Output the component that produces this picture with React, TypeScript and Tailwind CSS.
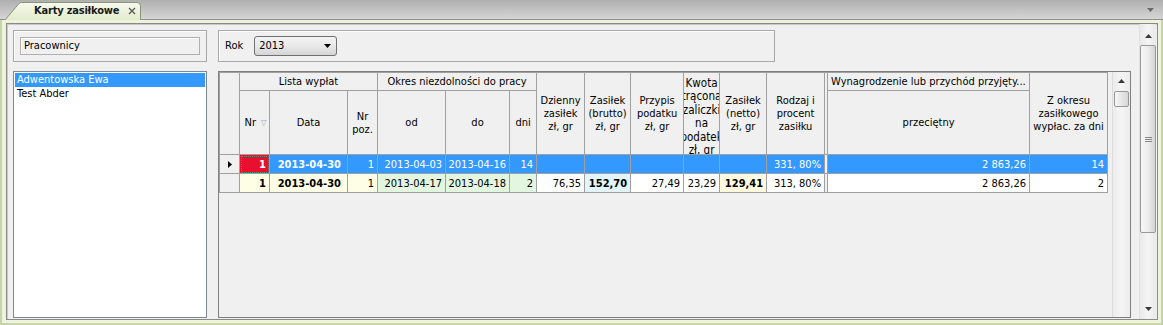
import React from 'react';

function Tri({ up = true, color = '#3a3a3a' }: { up?: boolean; color?: string }) {
  return (
    <svg width="7" height="4" viewBox="0 0 7 4">
      <path d={up ? 'M0 4 L3.5 0 L7 4 Z' : 'M0 0 L7 0 L3.5 4 Z'} fill={color} />
    </svg>
  );
}

const th = 'border border-[#a0a0a0] bg-[#f0f0f0] font-normal text-center align-middle p-0 leading-[13px]';
const td = 'border border-[#a0a0a0] text-right align-middle pr-[3px] pl-0 py-0 leading-none whitespace-nowrap overflow-hidden';
const dbl = 'border border-[#a0a0a0] bg-[#f0f0f0] p-0';

function Lines({ lines }: { lines: string[] }) {
  return (
    <div className="flex flex-col items-center">
      {lines.map((l) => (
        <span key={l} className="whitespace-nowrap">{l}</span>
      ))}
    </div>
  );
}

export default function App() {
  return (
    <div className="w-[1163px] h-[325px] overflow-hidden flex flex-col bg-[#f0f0f0] text-[11px] text-black font-['DejaVu_Sans_Condensed','DejaVu_Sans',sans-serif] [font-stretch:condensed] select-none">
      {/* tab strip */}
      <div className="h-[20px] shrink-0 flex items-end bg-gradient-to-b from-[#afafaf] to-[#d6d6d6] border-b border-[#8f8f8f]">
        <div className="relative ml-[5px] -mb-px w-[136px] h-[18px] flex items-center">
          <svg className="absolute inset-0" width="136" height="18" viewBox="0 0 136 18">
            <defs>
              <linearGradient id="tabg" x1="0" y1="0" x2="0" y2="1">
                <stop offset="0" stopColor="#f7faee" />
                <stop offset="1" stopColor="#e3ebcb" />
              </linearGradient>
            </defs>
            <path d="M0 18 L14 1.6 Q15 0.5 16.5 0.5 L132 0.5 Q135.5 0.5 135.5 4 L135.5 18" fill="url(#tabg)" stroke="#8b957a" />
          </svg>
          <span className="relative pl-[29px] font-bold text-[11px] tracking-[-0.2px] text-[#1a1a1a] whitespace-nowrap">Karty zasiłkowe</span>
          <svg className="relative ml-auto mr-[5px]" width="8" height="8" viewBox="0 0 8 8">
            <path d="M1 1 L7 7 M7 1 L1 7" stroke="#5a5a5a" strokeWidth="1.4" />
          </svg>
        </div>
        <div className="ml-auto mr-[9px] mb-[7px]">
          <Tri up={false} color="#6a6a6a" />
        </div>
      </div>

      {/* frame */}
      <div className="flex-1 min-h-0 bg-[#eff3de] border-l-2 border-r-2 border-b-2 border-[#c6d4a7] pt-[3px] pb-[3px] pl-[4px] pr-[3px]">
        <div className="h-full flex border border-[#8a8a8a] bg-[#f0f0f0] shadow-[inset_1px_1px_0_#c9c9c9]">
          <div className="flex-1 flex gap-[11px] pl-[6px] pt-[6px] pb-[1px]">
            {/* left column */}
            <div className="w-[194px] flex flex-col gap-[9px]">
              <div className="h-[32px] border border-[#a9a9a9] shadow-[inset_1px_1px_0_#ffffff] p-[6px]">
                <div className="h-[18px] border border-[#b0b0b0] shadow-[inset_1px_1px_0_#ffffff] flex items-center pl-[3px]">
                  Pracownicy
                </div>
              </div>
              <div className="flex-1 border border-[#828790] bg-white p-px">
                <div className="h-[14px] leading-[14px] pl-[2px] bg-[#3399ff] text-white">Adwentowska Ewa</div>
                <div className="h-[14px] leading-[14px] pl-[2px]">Test Abder</div>
              </div>
            </div>

            {/* right column */}
            <div className="w-[913px] flex flex-col gap-[9px]">
              <div className="w-[557px] h-[32px] border border-[#a9a9a9] shadow-[inset_1px_1px_0_#ffffff] flex items-center pl-[6px]">
                <span>Rok</span>
                <div className="ml-[11px] w-[83px] h-[20px] rounded-[3px] border border-[#707070] bg-gradient-to-b from-[#f3f3f3] via-[#e9e9e9] to-[#d5d5d5] flex items-center justify-between pl-[4px] pr-[5px]">
                  <span>2013</span>
                  <Tri up={false} color="#000" />
                </div>
              </div>

              {/* grid */}
              <div className="flex-1 flex border border-[#7f7f7f] bg-[#f0f0f0]">
                <div className="flex-1 overflow-hidden">
                  <table className="table-fixed border-collapse w-[888px]">
                    <colgroup>
                      <col className="w-[20px]" />
                      <col className="w-[30px]" />
                      <col className="w-[78px]" />
                      <col className="w-[30px]" />
                      <col className="w-[68px]" />
                      <col className="w-[64px]" />
                      <col className="w-[27px]" />
                      <col className="w-[48px]" />
                      <col className="w-[46px]" />
                      <col className="w-[53px]" />
                      <col className="w-[36px]" />
                      <col className="w-[47px]" />
                      <col className="w-[58px]" />
                      <col className="w-[3px]" />
                      <col className="w-[202px]" />
                      <col className="w-[78px]" />
                    </colgroup>
                    <thead>
                      <tr className="h-[18px]">
                        <th rowSpan={2} className={th}></th>
                        <th colSpan={3} className={th}>Lista wypłat</th>
                        <th colSpan={3} className={th}>Okres niezdolności do pracy</th>
                        <th rowSpan={2} className={th}><Lines lines={['Dzienny', 'zasiłek', 'zł, gr']} /></th>
                        <th rowSpan={2} className={th}><Lines lines={['Zasiłek', '(brutto)', 'zł, gr']} /></th>
                        <th rowSpan={2} className={th}><Lines lines={['Przypis', 'podatku', 'zł, gr']} /></th>
                        <th rowSpan={2} className={th}>
                          <div className="w-[35px] h-[81px] overflow-hidden flex flex-col items-center justify-start pt-[4px] leading-[13.4px] text-[11.5px]">
                            {['Kwota', 'trącona', 'zaliczki', 'na', 'podatek', 'zł, gr'].map((l) => (
                              <span key={l} className="whitespace-nowrap">{l}</span>
                            ))}
                          </div>
                        </th>
                        <th rowSpan={2} className={th}><Lines lines={['Zasiłek', '(netto)', 'zł, gr']} /></th>
                        <th rowSpan={2} className={th}><Lines lines={['Rodzaj i', 'procent', 'zasiłku']} /></th>
                        <th rowSpan={2} className={dbl}></th>
                        <th className={th}>
                          <div className="w-[201px] truncate text-left pl-[3px]">Wynagrodzenie lub przychód przyjęty...</div>
                        </th>
                        <th rowSpan={2} className={th}><Lines lines={['Z okresu', 'zasiłkowego', 'wypłac. za dni']} /></th>
                      </tr>
                      <tr className="h-[64px]">
                        <th className={th}>
                          <div className="flex items-center justify-center gap-[5px] pl-[2px]">
                            <span>Nr</span>
                            <span className="text-[8px] text-[#a8a8a8]">▽</span>
                          </div>
                        </th>
                        <th className={th}>Data</th>
                        <th className={th}><Lines lines={['Nr', 'poz.']} /></th>
                        <th className={th}>od</th>
                        <th className={th}>do</th>
                        <th className={th}>dni</th>
                        <th className={th}>przeciętny</th>
                      </tr>
                    </thead>
                    <tbody>
                      <tr className="h-[19px] bg-[#3399ff] text-white">
                        <td className="border border-[#a0a0a0] bg-[#f0f0f0] p-0">
                          <div className="flex justify-center">
                            <svg width="4" height="7" viewBox="0 0 4 7"><path d="M0 0 L4 3.5 L0 7 Z" fill="#000" /></svg>
                          </div>
                        </td>
                        <td className={`${td} bg-[#e8102e] font-bold outline-1 outline-dotted outline-[#2f9d74] -outline-offset-2`}>1</td>
                        <td className={`${td} font-bold pr-[6px]`}>2013-04-30</td>
                        <td className={td}>1</td>
                        <td className={td}>2013-04-03</td>
                        <td className={td}>2013-04-16</td>
                        <td className={td}>14</td>
                        <td className={td}></td>
                        <td className={td}></td>
                        <td className={td}></td>
                        <td className={td}></td>
                        <td className={td}></td>
                        <td className={td}>331, 80%</td>
                        <td className={dbl}></td>
                        <td className={td}>2 863,26</td>
                        <td className={td}>14</td>
                      </tr>
                      <tr className="h-[19px] bg-white">
                        <td className="border border-[#a0a0a0] bg-[#f0f0f0] p-0"></td>
                        <td className={`${td} bg-[#fefde6] font-bold`}>1</td>
                        <td className={`${td} bg-[#fefde6] font-bold pr-[6px]`}>2013-04-30</td>
                        <td className={`${td} bg-[#fefde6]`}>1</td>
                        <td className={`${td} bg-[#e3f6e0]`}>2013-04-17</td>
                        <td className={`${td} bg-[#e3f6e0]`}>2013-04-18</td>
                        <td className={`${td} bg-[#e3f6e0]`}>2</td>
                        <td className={td}>76,35</td>
                        <td className={`${td} bg-[#e2f5fa] font-bold`}>152,70</td>
                        <td className={td}>27,49</td>
                        <td className={td}>23,29</td>
                        <td className={`${td} bg-[#fff9e0] font-bold`}>129,41</td>
                        <td className={td}>313, 80%</td>
                        <td className={dbl}></td>
                        <td className={td}>2 863,26</td>
                        <td className={td}>2</td>
                      </tr>
                    </tbody>
                  </table>
                </div>
                {/* grid scrollbar */}
                <div className="w-[18px] flex flex-col border-l border-[#dcdcdc] bg-gradient-to-r from-[#ececec] via-[#f5f5f5] to-[#ececec]">
                  <div className="h-[18px] flex items-center justify-center"><Tri /></div>
                  <div className="mt-px mx-px h-[16px] rounded-[2px] border border-[#979797] bg-gradient-to-r from-[#f7f7f7] to-[#d6d6d6]"></div>
                  <div className="flex-1"></div>
                </div>
              </div>
            </div>
          </div>

          {/* outer scrollbar */}
          <div className="w-[17px] mr-px flex flex-col border-l border-[#e2e2e2] bg-gradient-to-r from-[#e9e9e9] via-[#f5f5f5] to-[#e9e9e9]">
            <div className="h-[21px] flex items-center justify-center pt-[2px]"><Tri /></div>
            <div className="h-[188px] rounded-[2px] border border-[#999999] bg-gradient-to-r from-[#f8f8f8] via-[#ececec] to-[#d3d3d3] flex items-center justify-center">
              <svg width="7" height="7" viewBox="0 0 7 7">
                <path d="M0 1.5 H7 M0 3.5 H7 M0 5.5 H7" stroke="#8a8a8a" strokeWidth="1" />
              </svg>
            </div>
            <div className="flex-1"></div>
            <div className="h-[21px] flex items-center justify-center"><Tri up={false} /></div>
          </div>
        </div>
      </div>
    </div>
  );
}
